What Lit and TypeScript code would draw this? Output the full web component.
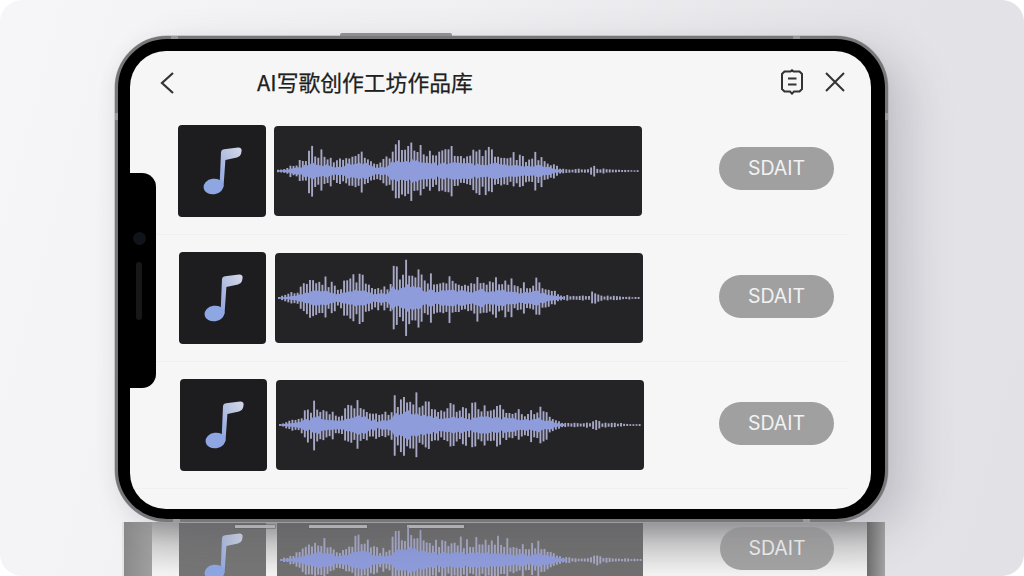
import { LitElement, html, css, svg } from "lit";
import { customElement } from "lit/decorators.js";

// envelope control points: [x within 368px box, amplitude]
const ENV: [number, number][] = [
  [3, 1], [12, 4], [22, 9], [32, 18], [38, 27], [50, 22], [62, 12], [72, 20], [82, 28], [92, 22],
  [102, 12], [114, 16], [118, 35], [124, 30], [132, 41], [140, 34], [150, 27], [165, 22], [175, 27],
  [190, 21], [205, 25], [225, 24], [240, 19], [250, 16], [262, 21], [275, 12], [285, 4], [300, 2],
  [315, 3], [319, 10], [324, 3], [345, 2], [364, 1],
];

function envAt(x: number): number {
  for (let i = 1; i < ENV.length; i++) {
    const [x0, a0] = ENV[i - 1];
    const [x1, a1] = ENV[i];
    if (x <= x1) return a0 + ((a1 - a0) * (x - x0)) / (x1 - x0);
  }
  return 1;
}

function noise(x: number, k: number, seed: number): number {
  return Math.abs(Math.sin(x * k + seed) * 43758.5453) % 1;
}

function bars(seed: number) {
  const out: { x: number; up: number; down: number }[] = [];
  for (let x = 4; x < 364; x += 3.1) {
    const a = envAt(x) * (noise(x, 3.77, seed) > 0.6 ? 1 : 0.68);
    out.push({
      x,
      up: a * (0.78 + 0.22 * noise(x, 12.9898, seed)),
      down: a * (0.78 + 0.22 * noise(x, 78.233, seed)),
    });
  }
  return out;
}

function bodyPath(seed: number) {
  const pts: string[] = [];
  const lower: string[] = [];
  for (let x = 3; x <= 288; x += 2.5) {
    const a = Math.max(0.8, envAt(x) * 0.3 * (0.75 + 0.5 * noise(x, 5.31, seed)));
    pts.push(`${x} ${45 - a}`);
    lower.unshift(`${x} ${45 + a}`);
  }
  return `M${pts.join("L")}L${lower.join("L")}Z`;
}

function waveform(seed: number) {
  return html`<svg class="wave-svg" viewBox="0 0 368 90" width="368" height="90" aria-hidden="true">
    ${bars(seed).map(
      (b) => svg`<line x1=${b.x} x2=${b.x} y1=${45 - b.up} y2=${45 + b.down} stroke="#a6a8c6" stroke-width="1.9"></line>`
    )}
    <path d=${bodyPath(seed)} fill="#8f9cdc"></path>
  </svg>`;
}

const note = html`<svg class="note" viewBox="0 0 88 92" width="88" height="92" aria-hidden="true">
  <defs>
    <linearGradient id="ng" x1="0" y1="1" x2="1" y2="0">
      <stop offset="0" stop-color="#8ba3e0"></stop>
      <stop offset="0.5" stop-color="#b4c0e0"></stop>
      <stop offset="1" stop-color="#d4d9e8"></stop>
    </linearGradient>
  </defs>
  <path d="M41.5 62 L43 27 Q43.3 24.5 46 24.2 L60 22.5 Q64 22.3 63.6 26 L63 29 Q62.4 31.6 59 32.4 L47.4 35 L45.5 62 Z" fill="url(#ng)"></path>
  <ellipse cx="35.5" cy="61.5" rx="10" ry="7.8" transform="rotate(-8 35.5 61.5)" fill="#8ea6e2"></ellipse>
</svg>`;

@customElement("app-root")
export class AppRoot extends LitElement {
  static styles = css`
    :host {
      display: block;
      width: 1024px;
      height: 576px;
      background: #fff;
      font-family: "Noto Sans CJK SC", "Noto Sans", sans-serif;
    }
    .stage {
      width: 1024px;
      height: 576px;
      box-sizing: border-box;
      overflow: hidden;
      border-radius: 22px;
      padding: 36px 0 0 115px;
      background: linear-gradient(105deg, #f6f6f8 0%, #f0f0f3 40%, #e4e4e8 75%, #e2e2e6 100%);
    }
    .phone {
      position: relative;
      z-index: 1;
      width: 773px;
      height: 486px;
      box-sizing: border-box;
      padding: 12px 14px 10px 12px;
      border-radius: 52px;
      background: #000;
      border: 3px solid #77777a;
      box-shadow: 0 0 0 0.5px #a5a5a7, 24px 14px 44px rgba(70, 70, 85, 0.2), -4px 4px 16px rgba(90, 90, 100, 0.06);
    }
    .side-key {
      position: absolute;
      left: 222px;
      top: -6px;
      width: 112px;
      height: 3px;
      background: #8e8e90;
      border-radius: 2px 2px 0 0;
    }
    .band {
      position: absolute;
      background: #9a9a9c;
    }
    .band.tl { left: 53px; top: -3px; width: 7px; height: 3px; }
    .band.tr { left: 675px; top: -3px; width: 7px; height: 3px; }
    .band.lt { left: -3px; top: 74px; width: 3px; height: 7px; }
    .band.rt { right: -3px; top: 74px; width: 3px; height: 7px; }
    .band.bl { left: 55px; bottom: -3px; width: 7px; height: 3px; }
    .band.br { left: 685px; bottom: -3px; width: 7px; height: 3px; }
    .screen {
      position: relative;
      height: 100%;
      background: #f6f6f6;
      border-radius: 36px;
      overflow: hidden;
    }
    .notch {
      position: absolute;
      left: 0;
      top: 122px;
      width: 26px;
      height: 215px;
      background: #000;
      border-radius: 0 14px 14px 0;
    }
    .cam {
      position: absolute;
      left: 3px;
      top: 59px;
      width: 13px;
      height: 13px;
      border-radius: 50%;
      background: #11131a;
    }
    .speaker {
      position: absolute;
      left: 6px;
      top: 89px;
      width: 6px;
      height: 58px;
      border-radius: 3px;
      background: #171717;
    }
    .header {
      height: 57px;
      box-sizing: border-box;
      padding: 7px 26px 0 29px;
      display: flex;
      align-items: center;
      color: #2b2b2b;
    }
    .title {
      margin: 0 0 2px 82px;
      font-size: 21.8px;
      font-weight: 400;
      line-height: 30px;
      white-space: nowrap;
      color: #202020;
      -webkit-text-stroke: 0.25px #202020;
    }
    .actions {
      margin: 0 0 3px auto;
      display: flex;
      align-items: center;
      gap: 21px;
    }
    .row {
      height: 127px;
      box-sizing: border-box;
      margin-right: 22px;
      padding-right: 15px;
      display: flex;
      align-items: center;
      border-bottom: 1px solid #f0f0f0;
    }
    .thumb {
      flex: none;
      width: 87.5px;
      height: 92px;
      border-radius: 4px;
      background: #1d1d20;
      overflow: hidden;
    }
    .note {
      display: block;
      filter: blur(0.4px);
    }
    .wave {
      flex: none;
      width: 368px;
      height: 90px;
      margin-left: 8.5px;
      border-radius: 4px;
      background: #242326;
    }
    .wave-svg {
      display: block;
      filter: blur(0.4px);
    }
    .btn {
      flex: none;
      margin-left: auto;
      width: 115px;
      height: 43px;
      border-radius: 22px;
      border: none;
      padding: 0;
      background: #a0a0a0;
      color: #f2f2f2;
      font: 400 19.5px/43px Inter, "Noto Sans", sans-serif;
    }
    .reflect {
      position: relative;
      display: flex;
      height: 60px;
      margin-left: 7px;
      width: 763px;
      background: linear-gradient(180deg, #a8a8a8 0%, #d4d4d4 40%, #f2f2f2 85%);
      overflow: hidden;
    }
    .r-bar {
      position: absolute;
      top: 3px;
      height: 3px;
      background: #c4c4c4;
      box-shadow: 0 0 0 0.5px #666;
    }
    .r-left {
      flex: none;
      width: 30px;
      background: linear-gradient(90deg, #8a8a8a, #a0a0a0);
      border-left: 2px solid #e4e4e4;
      box-sizing: border-box;
    }
    .r-main {
      flex: 1;
      min-width: 0;
      display: flex;
      align-items: flex-start;
      padding: 1px 0 0 27px;
    }
    .r-thumb {
      flex: none;
      width: 87px;
      height: 92px;
      overflow: hidden;
      background: #757575;
    }
    .r-thumb .note {
      margin-top: -12px;
    }
    .r-wave {
      flex: none;
      width: 366px;
      height: 90px;
      margin-left: 11px;
      overflow: hidden;
      background: #707070;
    }
    .r-wave .wave-svg {
      margin-top: -8px;
    }
    .r-btn {
      flex: none;
      margin: 4px 0 0 77px;
      width: 114px;
      height: 43px;
      border-radius: 22px;
      background: #a2a2a2;
      color: #efefef;
      text-align: center;
      font: 400 19.5px/43px Inter, "Noto Sans", sans-serif;
    }
    .r-right {
      flex: none;
      width: 18px;
      margin-left: auto;
      background: linear-gradient(90deg, #6e6e6e, #a4a4a4);
    }
  `;

  render() {
    const rows = [
      { pad: 48, seed: 1, lift: 5 },
      { pad: 48.5, seed: 2.4, lift: 4 },
      { pad: 49.5, seed: 3.7, lift: 4 },
    ];
    const barSpots = [
      { left: 113, width: 40 },
      { left: 187, width: 58 },
      { left: 285, width: 57 },
    ];
    return html`<div class="stage">
      <div class="phone">
        <div class="side-key"></div>
        <i class="band tl"></i><i class="band tr"></i><i class="band lt"></i>
        <i class="band rt"></i><i class="band bl"></i><i class="band br"></i>
        <div class="screen">
          <div class="header">
            <svg width="16" height="24" viewBox="0 0 16 24" fill="none" stroke="#333" stroke-width="2.2" aria-hidden="true">
              <path d="M14 2 L3 12 L14 22"></path>
            </svg>
            <div class="title">AI写歌创作工坊作品库</div>
            <div class="actions">
              <svg width="24" height="26" viewBox="0 0 24 26" fill="none" stroke="#333" stroke-width="2" aria-hidden="true">
                <path d="M4.5 2.5 H10.5 L12 1.2 L13.5 2.5 H19.5 L22 5 V20 L19.5 22.5 H14 L12 24.6 L10 22.5 H4.5 L2 20 V5 Z"></path>
                <path d="M8 9.5 H16.5 M8 15.5 H16.5" stroke-width="2.2"></path>
              </svg>
              <svg width="20" height="20" viewBox="0 0 20 20" fill="none" stroke="#333" stroke-width="2" aria-hidden="true">
                <path d="M1 1 L19 19 M19 1 L1 19"></path>
              </svg>
            </div>
          </div>
          ${rows.map(
            (r) => html`<div class="row" style="padding-left:${r.pad}px">
              <div class="thumb">${note}</div>
              <div class="wave">${waveform(r.seed)}</div>
              <button class="btn" style="margin-bottom:${r.lift}px">SDAIT</button>
            </div>`
          )}
          <div class="notch"><div class="cam"></div><div class="speaker"></div></div>
        </div>
      </div>
      <div class="reflect">
        ${barSpots.map((b) => html`<i class="r-bar" style="left:${b.left}px;width:${b.width}px"></i>`)}
        <div class="r-left"></div>
        <div class="r-main">
          <div class="r-thumb">${note}</div>
          <div class="r-wave">${waveform(5)}</div>
          <div class="r-btn">SDAIT</div>
        </div>
        <div class="r-right"></div>
      </div>
    </div>`;
  }
}
